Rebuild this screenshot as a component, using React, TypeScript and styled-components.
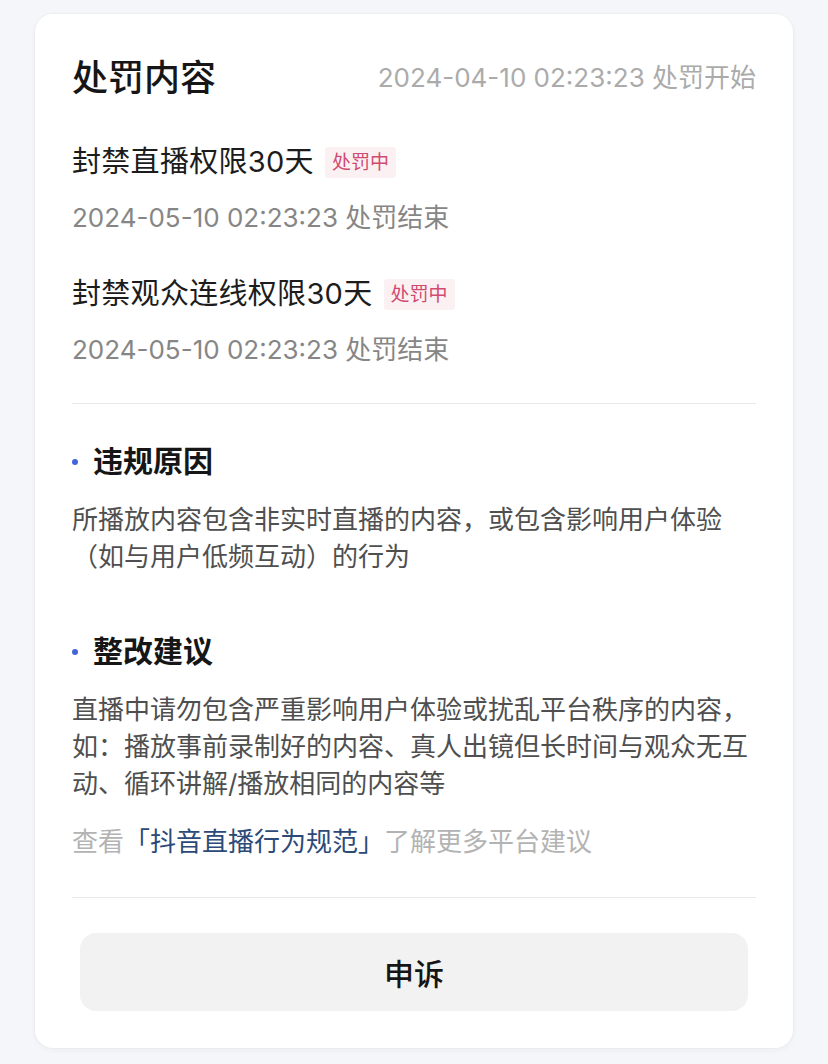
import React from "react";
import styled, { createGlobalStyle } from "styled-components";

const GlobalStyle = createGlobalStyle`
  html, body {
    margin: 0;
    padding: 0;
    background: #f4f6fa;
  }
  body {
    font-family: Inter, "Noto Sans CJK SC", "Noto Sans", sans-serif;
    -webkit-font-smoothing: antialiased;
  }
`;

const Page = styled.div`
  padding: 14px 35px 17px;
`;

const Card = styled.div`
  background: #ffffff;
  border-radius: 18px;
  box-shadow: 0 0 0 1px rgba(0, 0, 0, 0.025), 0 2px 6px rgba(30, 40, 80, 0.04);
  padding: 40px 37px 37px;
  display: flex;
  flex-direction: column;
`;

const Header = styled.div`
  display: flex;
  align-items: center;
  justify-content: space-between;
  height: 48px;
`;

const Title = styled.h1`
  margin: 0;
  font-size: 36px;
  font-weight: 500;
  color: #161616;
  line-height: 48px;
`;

const StartTime = styled.span`
  font-size: 26px;
  color: #ababab;
  line-height: 48px;
`;

const PenaltyList = styled.div`
  display: flex;
  flex-direction: column;
  gap: 38px;
  margin-top: 40px;
`;

const Penalty = styled.div`
  display: flex;
  flex-direction: column;
  gap: 18px;
`;

const PenaltyRow = styled.div`
  display: flex;
  align-items: center;
  gap: 11px;
  height: 40px;
`;

const PenaltyName = styled.span`
  font-size: 29px;
  color: #1c1c1c;
  line-height: 40px;
  letter-spacing: 0.3px;
`;

const Badge = styled.span`
  font-size: 19px;
  color: #d24a70;
  background: #fbf1f3;
  border-radius: 3px;
  padding: 0 7px;
  height: 31px;
  line-height: 31px;
`;

const EndTime = styled.div`
  font-size: 26px;
  color: #868686;
  line-height: 36px;
`;

const Divider = styled.div<{ $top: number }>`
  height: 1px;
  background: #e9e9e9;
  margin-top: ${(p) => p.$top}px;
`;

const Section = styled.div<{ $top: number }>`
  margin-top: ${(p) => p.$top}px;
  display: flex;
  flex-direction: column;
`;

const SectionTitle = styled.h2`
  margin: 0;
  display: flex;
  align-items: center;
  gap: 15px;
  font-size: 30px;
  font-weight: 700;
  color: #161616;
  line-height: 40px;

  &::before {
    content: "";
    width: 6px;
    height: 6px;
    border-radius: 50%;
    background: #4465d9;
    margin-top: 2px;
  }
`;

const Body = styled.p`
  margin: 20px 0 0;
  font-size: 26px;
  line-height: 37px;
  color: #4f4f4f;
`;

const MoreLine = styled.p`
  margin: 21px 0 0;
  font-size: 26px;
  line-height: 37px;
  color: #b3b3b3;
`;

const Link = styled.a`
  color: #2c4a78;
  text-decoration: none;
`;

const AppealButton = styled.button`
  margin: 35px 8px 0;
  height: 78px;
  border: none;
  border-radius: 16px;
  background: #f2f2f3;
  font-family: inherit;
  font-size: 30px;
  font-weight: 500;
  color: #151515;
  cursor: pointer;
`;

const penalties = [
  { name: "封禁直播权限30天", end: "2024-05-10 02:23:23 处罚结束" },
  { name: "封禁观众连线权限30天", end: "2024-05-10 02:23:23 处罚结束" },
];

export default function App() {
  return (
    <>
      <GlobalStyle />
      <Page>
        <Card>
          <Header>
            <Title>处罚内容</Title>
            <StartTime>2024-04-10 02:23:23 处罚开始</StartTime>
          </Header>

          <PenaltyList>
            {penalties.map((p) => (
              <Penalty key={p.name}>
                <PenaltyRow>
                  <PenaltyName>{p.name}</PenaltyName>
                  <Badge>处罚中</Badge>
                </PenaltyRow>
                <EndTime>{p.end}</EndTime>
              </Penalty>
            ))}
          </PenaltyList>

          <Divider $top={35} />

          <Section $top={37}>
            <SectionTitle>违规原因</SectionTitle>
            <Body>
              所播放内容包含非实时直播的内容，或包含影响用户体验（如与用户低频互动）的行为
            </Body>
          </Section>

          <Section $top={56}>
            <SectionTitle>整改建议</SectionTitle>
            <Body>
              直播中请勿包含严重影响用户体验或扰乱平台秩序的内容，如：播放事前录制好的内容、真人出镜但长时间与观众无互动、循环讲解/播放相同的内容等
            </Body>
            <MoreLine>
              查看<Link href="#">「抖音直播行为规范」</Link>了解更多平台建议
            </MoreLine>
          </Section>

          <Divider $top={37} />

          <AppealButton>申诉</AppealButton>
        </Card>
      </Page>
    </>
  );
}
